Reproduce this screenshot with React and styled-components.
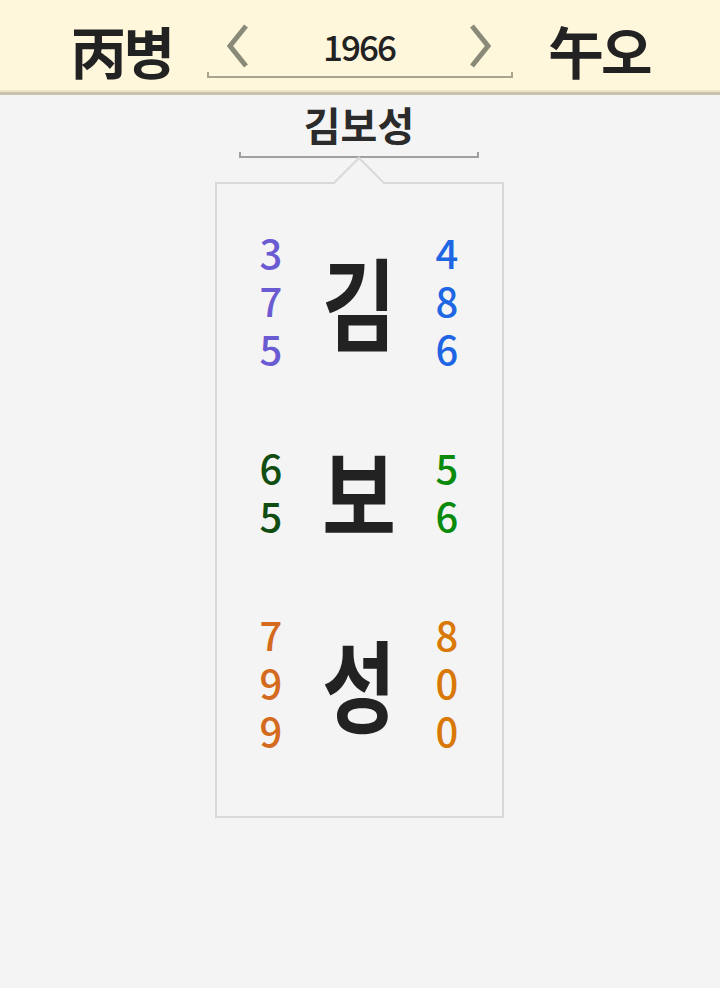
import React from "react";
import styled, { createGlobalStyle } from "styled-components";

const GlobalStyle = createGlobalStyle`
  html, body {
    margin: 0;
    padding: 0;
    background: #f4f4f4;
    font-family: "Noto Sans CJK KR", "Noto Sans", sans-serif;
    color: #222;
  }
`;

const Header = styled.header`
  height: 84px;
  padding-top: 8px;
  background: #fff7dc;
  border-bottom: 3px solid #c9c1a9;
  box-shadow: inset 0 -2px 0 #ebe3c6;
  display: flex;
  align-items: center;
  justify-content: center;
  gap: 35px;
`;

const Ganji = styled.div`
  font-size: 56px;
  font-weight: 700;
  line-height: 1;
  color: #222;
  letter-spacing: -3px;
`;

const YearNav = styled.div`
  width: 306px;
  display: flex;
  flex-direction: column;
`;

const YearRow = styled.div`
  height: 46px;
  display: flex;
  align-items: center;
  justify-content: space-between;
  padding: 0 21px 0 19px;
`;

const Year = styled.span`
  font-size: 35px;
  font-weight: 500;
  line-height: 1;
  letter-spacing: -2px;
  color: #222;
`;

const Bracket = styled.div`
  width: ${(p) => p.width}px;
  height: 6px;
  margin: ${(p) => p.margin || "0"};
  border: 2px solid ${(p) => p.color};
  border-top: none;
  box-sizing: border-box;
`;

const Chevron = ({ dir }) => (
  <svg width="24" height="44" viewBox="0 0 24 44">
    <polyline
      points={dir === "left" ? "20,2 4,22 20,42" : "4,2 20,22 4,42"}
      fill="none"
      stroke="#8a8a78"
      strokeWidth="5"
    />
  </svg>
);

const Main = styled.main`
  display: flex;
  flex-direction: column;
  align-items: center;
  padding-right: 2px;
`;

const Name = styled.h1`
  margin: 5px 0 0;
  font-size: 40px;
  font-weight: 700;
  line-height: 48px;
  letter-spacing: 0;
  color: #2b2b2b;
`;

const Card = styled.section`
  position: relative;
  width: 289px;
  box-sizing: border-box;
  margin-top: 24px;
  padding: 20px 0 39px;
  border: 2px solid #d8d8d8;
  background: #f4f4f4;

  &::before {
    content: "";
    position: absolute;
    left: 50%;
    top: -20px;
    width: 34px;
    height: 34px;
    background: #f4f4f4;
    border-top: 2px solid #d8d8d8;
    border-left: 2px solid #d8d8d8;
    transform: translateX(-50%) rotate(45deg);
  }
`;

const Row = styled.div`
  height: 191px;
  display: grid;
  grid-template-columns: 40px 136px 40px;
  justify-content: center;
  align-items: center;
  justify-items: center;
`;

const Digits = styled.div`
  display: flex;
  flex-direction: column;
  align-items: center;
  font-size: 40px;
  font-weight: 500;
  line-height: 48px;
  color: ${(p) => p.color};
`;

const Syllable = styled.div`
  font-size: 100px;
  font-weight: 700;
  line-height: 1;
  color: #222;
  transform: scaleX(0.8);
`;

const rows = [
  { ch: "김", left: ["3", "7", "5"], right: ["4", "8", "6"], lc: "#6b5bd2", rc: "#1f66e5" },
  { ch: "보", left: ["6", "5"], right: ["5", "6"], lc: "#114d11", rc: "#0a8a0a" },
  { ch: "성", left: ["7", "9", "9"], right: ["8", "0", "0"], lc: "#d46a1e", rc: "#d97806" },
];

export default function App() {
  return (
    <>
      <GlobalStyle />
      <Header>
        <Ganji>丙병</Ganji>
        <YearNav>
          <YearRow>
            <Chevron dir="left" />
            <Year>1966</Year>
            <Chevron dir="right" />
          </YearRow>
          <Bracket width={306} color="#a8a490" margin="3px 0 0" />
        </YearNav>
        <Ganji>午오</Ganji>
      </Header>
      <Main>
        <Name>김보성</Name>
        <Bracket width={240} color="#a0a0a0" margin="4px 0 0" />
        <Card>
          {rows.map((r) => (
            <Row key={r.ch}>
              <Digits color={r.lc}>
                {r.left.map((d, i) => (
                  <span key={i}>{d}</span>
                ))}
              </Digits>
              <Syllable>{r.ch}</Syllable>
              <Digits color={r.rc}>
                {r.right.map((d, i) => (
                  <span key={i}>{d}</span>
                ))}
              </Digits>
            </Row>
          ))}
        </Card>
      </Main>
    </>
  );
}
